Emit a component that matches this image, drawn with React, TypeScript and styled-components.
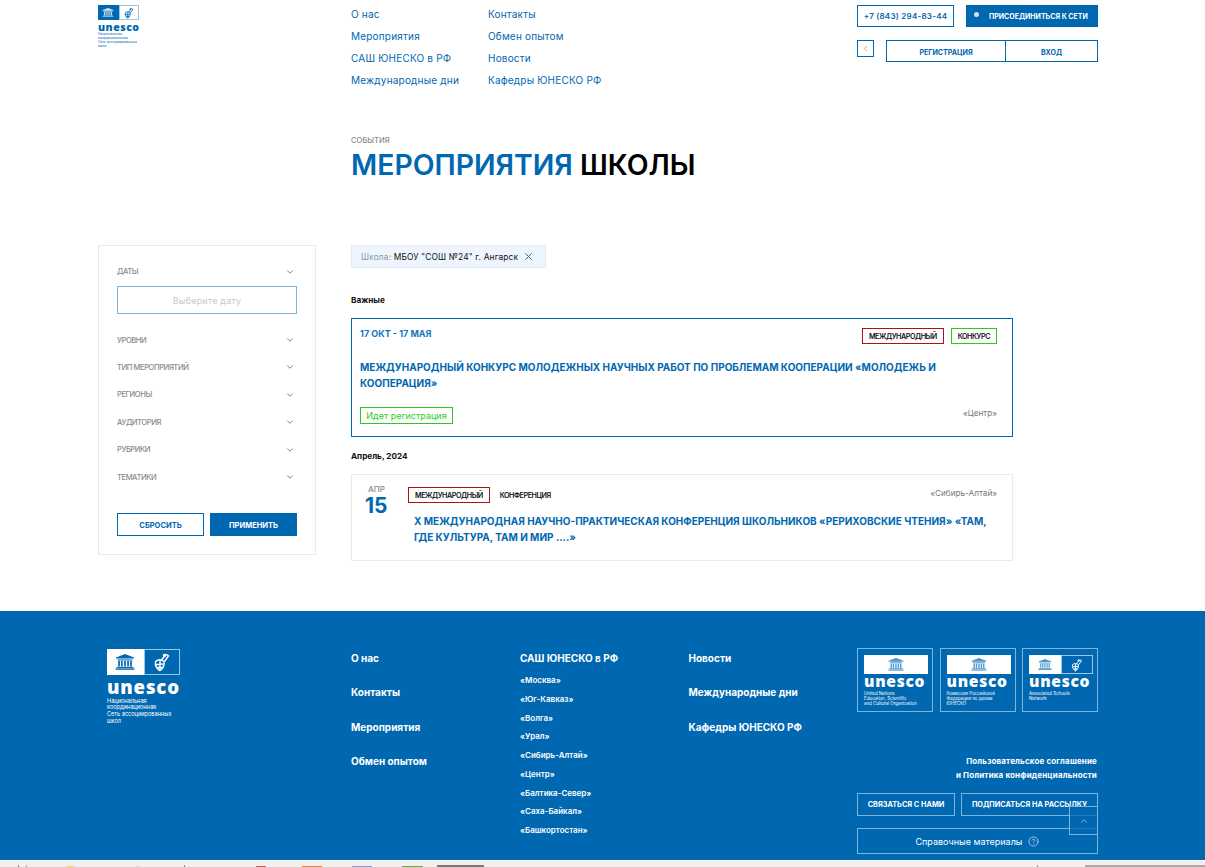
import React from 'react';
import styled, { createGlobalStyle } from 'styled-components';
import { ChevronDown, ChevronLeft, ChevronUp, CircleHelp, X } from 'lucide-react';

const BLUE = '#0067b1';
const PALE = '#dfecfa';

const Global = createGlobalStyle`
  html, body {
    margin: 0;
    height: 867px;
    overflow: hidden;
    background: #fff;
    font-family: Inter, "Noto Sans", sans-serif;
    color: ${BLUE};
  }
  * { box-sizing: border-box; }
  #root { position: relative; height: 867px; overflow: hidden; }
`;

const Header = styled.header`
  display: flex;
  height: 135px;
  padding: 5px 107px 0 98px;
`;

const LogoCol = styled.div`
  width: 253px;
`;

const NavCol = styled.nav<{ $width: number }>`
  width: ${p => p.$width}px;
  display: flex;
  flex-direction: column;
  gap: 7px;
  padding-top: 2px;
`;

const NavLink = styled.a`
  font-size: 10px;
  line-height: 15px;
  letter-spacing: 0.2px;
  white-space: nowrap;
`;

const HeaderRight = styled.div`
  margin-left: auto;
  width: 241px;
  display: flex;
  flex-direction: column;
  gap: 13px;
`;

const HeaderRow = styled.div`
  display: flex;
  align-items: flex-start;
`;

const Phone = styled.a`
  width: 97px;
  height: 22px;
  border: 1px solid ${BLUE};
  font-size: 8px;
  font-weight: 600;
  letter-spacing: 0.25px;
  display: flex;
  align-items: center;
  justify-content: center;
  white-space: nowrap;
`;

const JoinButton = styled.a`
  margin-left: 12px;
  width: 132px;
  height: 22px;
  background: ${BLUE};
  color: #fff;
  font-size: 7px;
  font-weight: 700;
  display: flex;
  align-items: center;
  gap: 10px;
  padding-left: 8px;
  white-space: nowrap;
`;

const JoinDot = styled.span`
  width: 5px;
  height: 5px;
  border-radius: 50%;
  background: #cfe2f3;
  margin-bottom: 3px;
`;

const BackBox = styled.a`
  width: 17px;
  height: 17px;
  border: 1px solid ${BLUE};
  margin-right: 12px;
  display: flex;
  align-items: center;
  justify-content: center;
  color: #7d8b98;
`;

const AuthButton = styled.a<{ $width: number }>`
  width: ${p => p.$width}px;
  height: 22px;
  border: 1px solid ${BLUE};
  font-size: 7.1px;
  font-weight: 700;
  padding-top: 2px;
  display: flex;
  align-items: center;
  justify-content: center;
  & + & { border-left: 0; }
`;

const TitleBlock = styled.section`
  height: 110px;
  padding-left: 351px;
`;

const Eyebrow = styled.div`
  font-size: 7.6px;
  line-height: 12px;
  color: #8b8b8b;
  font-weight: 500;
`;

const PageTitle = styled.h1`
  margin: 1px 0 0;
  font-size: 28.4px;
  line-height: 34px;
  font-weight: 600;
  white-space: nowrap;
  span { color: #000; }
`;

const Content = styled.main`
  display: flex;
  height: 366px;
  padding-left: 98px;
`;

const Sidebar = styled.aside`
  width: 218px;
  height: 310px;
  border: 1px solid ${PALE};
  padding: 12px 18px 18px;
  margin-right: 35px;
  display: flex;
  flex-direction: column;
`;

const FilterRow = styled.div`
  height: 27.4px;
  flex: none;
  display: flex;
  align-items: center;
  justify-content: space-between;
  padding-right: 2px;
  color: #8a8a8a;
  font-size: 7.6px;
  letter-spacing: -0.45px;
  font-weight: 500;
  white-space: nowrap;
`;

const DateInput = styled.div`
  flex: none;
  height: 28px;
  margin: 1px 0 12px;
  border: 1px solid #7fb3d9;
  color: #c8c8c8;
  font-size: 9px;
  letter-spacing: 0.2px;
  display: flex;
  align-items: center;
  justify-content: center;
`;

const SideButtons = styled.div`
  display: flex;
  gap: 6px;
  margin-top: 22px;
`;

const SideButton = styled.a<{ $solid?: boolean }>`
  flex: 1;
  height: 23px;
  border: 1px solid ${BLUE};
  background: ${p => (p.$solid ? BLUE : '#fff')};
  color: ${p => (p.$solid ? '#fff' : BLUE)};
  font-size: 7.5px;
  font-weight: 700;
  padding-top: 2px;
  display: flex;
  align-items: center;
  justify-content: center;
`;

const Feed = styled.div`
  width: 662px;
`;

const Chip = styled.div`
  width: 195px;
  height: 23px;
  background: #eef5fd;
  border: 1px solid ${PALE};
  padding-left: 9px;
  display: flex;
  align-items: center;
  gap: 5px;
  font-size: 8.4px;
  color: #111;
  letter-spacing: 0.15px;
  white-space: nowrap;
  b { color: #8b98a5; font-weight: 400; }
  svg { color: ${BLUE}; }
`;

const SectionLabel = styled.div<{ $top: number; $bottom: number }>`
  margin: ${p => p.$top}px 0 ${p => p.$bottom}px;
  font-size: 8.2px;
  line-height: 12px;
  font-weight: 700;
  color: #111;
`;

const FeaturedCard = styled.article`
  height: 119px;
  border: 1px solid ${BLUE};
  padding: 9px 15px 12px 8px;
  display: flex;
  flex-direction: column;
`;

const CardTop = styled.div`
  display: flex;
  justify-content: space-between;
`;

const DateRange = styled.div`
  font-size: 9px;
  line-height: 12px;
  font-weight: 700;
  color: #1674b9;
`;

const Tags = styled.div`
  display: flex;
  gap: 7px;
  align-items: center;
`;

const Tag = styled.span<{ $color?: string }>`
  height: 16px;
  padding: 0 6px;
  border: 1px solid ${p => p.$color ?? 'transparent'};
  color: #111;
  font-size: 7.2px;
  letter-spacing: -0.45px;
  font-weight: 600;
  display: flex;
  align-items: center;
  white-space: nowrap;
`;

const CardTitle = styled.h3<{ $top: number }>`
  margin: ${p => p.$top}px 0 0;
  font-size: 10px;
  line-height: 16px;
  font-weight: 700;
  color: ${BLUE};
`;

const CardBottom = styled.div`
  margin-top: auto;
  display: flex;
  justify-content: space-between;
  align-items: flex-start;
`;

const Status = styled.span`
  height: 17px;
  width: 93px;
  border: 1px solid #2ccb1a;
  color: #2ccb1a;
  font-size: 9px;
  display: flex;
  align-items: center;
  justify-content: center;
  white-space: nowrap;
`;

const Region = styled.span`
  font-size: 8.2px;
  color: #777;
  line-height: 12px;
  white-space: nowrap;
`;

const EventCard = styled.article`
  height: 87px;
  border: 1px solid ${PALE};
  padding: 12px 15px 0 13px;
  display: flex;
`;

const DateCol = styled.div`
  width: 43px;
  flex: none;
  text-align: left;
`;

const Month = styled.div`
  margin-top: -2px;
  padding-left: 3px;
  font-size: 8px;
  line-height: 9px;
  font-weight: 600;
  color: #9a9a9a;
`;

const Day = styled.div`
  margin-top: 1px;
  font-size: 21px;
  line-height: 22px;
  font-weight: 700;
  color: ${BLUE};
`;

const EventBody = styled.div`
  flex: 1;
`;

const EventTop = styled.div`
  display: flex;
  justify-content: space-between;
  align-items: flex-start;
`;

const EventTags = styled(Tags)`
  gap: 3px;
`;

const EventTitle = styled(CardTitle)`
  padding-left: 6px;
`;

const Footer = styled.footer`
  height: 249px;
  background: ${BLUE};
  color: #fff;
  display: flex;
  padding: 37px 107px 0 107px;
`;

const FooterLogo = styled.div`
  width: 244px;
  padding-top: 1px;
`;

const FooterNav = styled.nav<{ $width: number }>`
  width: ${p => p.$width}px;
  display: flex;
  flex-direction: column;
  gap: 20.4px;
  padding-top: 3px;
`;

const FooterLink = styled.a`
  display: block;
  font-size: 10px;
  line-height: 14px;
  font-weight: 700;
  white-space: nowrap;
`;

const RegionCol = styled.div`
  width: 168.5px;
  padding-top: 3px;
`;

const RegionList = styled.ul`
  list-style: none;
  margin: 9px 0 0;
  padding: 0;
  display: flex;
  flex-direction: column;
  gap: 6.75px;
`;

const RegionItem = styled.li`
  font-size: 8px;
  line-height: 12px;
  font-weight: 600;
  white-space: nowrap;
`;

const FooterRight = styled.div`
  margin-left: auto;
  width: 241px;
  flex: none;
  display: flex;
  flex-direction: column;
`;

const PartnerRow = styled.div`
  display: flex;
  justify-content: space-between;
`;

const PartnerCard = styled.div`
  width: 76px;
  height: 64px;
  border: 1px solid #7fb3d9;
  padding: 6px 6px 0;
`;

const Legal = styled.div`
  margin-top: 43px;
  text-align: right;
  font-size: 8px;
  line-height: 13.5px;
  font-weight: 700;
  letter-spacing: 0.15px;
  white-space: nowrap;
  padding-right: 1px;
`;

const FooterButtons = styled.div`
  display: flex;
  gap: 6px;
  margin-top: 11px;
`;

const OutlineButton = styled.a<{ $width?: number }>`
  width: ${p => (p.$width ? `${p.$width}px` : '100%')};
  height: 23px;
  border: 1px solid #7fb3d9;
  font-size: 7.3px;
  font-weight: 700;
  display: flex;
  align-items: center;
  justify-content: center;
  white-space: nowrap;
  overflow: hidden;
`;

const HelpButton = styled(OutlineButton)`
  margin-top: 12px;
  height: 26px;
  font-size: 9px;
  font-weight: 400;
  gap: 6px;
  svg { color: #a9cde8; }
`;

const ScrollTop = styled.a`
  position: absolute;
  left: 1069px;
  top: 806px;
  width: 29px;
  height: 29px;
  border: 1px solid #7fb3d9;
  background: rgba(0, 103, 177, 0.72);
  display: flex;
  align-items: center;
  justify-content: center;
  color: #9cc6e6;
`;

/* cropped taskbar under the page */
const Taskbar = styled.div`
  height: 7px;
  margin-top: 1px;
  background: #f0f0f0;
  display: flex;
  align-items: flex-end;
`;

const TaskItem = styled.span<{ $left: number; $width: number; $color: string; $height?: number }>`
  flex: none;
  margin-left: ${p => p.$left}px;
  width: ${p => p.$width}px;
  height: ${p => p.$height ?? 2}px;
  background: ${p => p.$color};
`;

const LogoFrame = styled.div<{ $width: number; $height: number }>`
  width: ${p => p.$width}px;
  height: ${p => p.$height}px;
  display: flex;
`;

const LogoCell = styled.div<{ $bg: string; $fg: string; $edge: string }>`
  flex: 1;
  background: ${p => p.$bg};
  color: ${p => p.$fg};
  border: 1px solid ${p => p.$edge};
  display: flex;
  align-items: center;
  justify-content: center;
`;

const Wordmark = styled.div<{ $size: number; $top: number; $color: string }>`
  font-family: "Open Sans", Inter, sans-serif;
  font-size: ${p => p.$size}px;
  line-height: ${p => p.$size * 0.8}px;
  margin-top: ${p => p.$top}px;
  font-weight: 800;
  letter-spacing: ${p => p.$size * 0.045}px;
  color: ${p => p.$color};
  white-space: nowrap;
`;

const LogoCaption = styled.div<{ $size: number; $line: number; $top: number }>`
  font-size: ${p => p.$size}px;
  line-height: ${p => p.$line}px;
  margin-top: ${p => p.$top}px;
  white-space: nowrap;
`;

const Temple = ({ size }: { size: number }) => (
  <svg width={size} height={size * 0.8} viewBox="0 0 20 16" fill="currentColor">
    <path d="M10 0 19 3.4V4.6H1V3.4Z" />
    <rect x="2.5" y="5.4" width="15" height="1" />
    <rect x="3.2" y="6.8" width="1.7" height="5.6" />
    <rect x="6" y="6.8" width="1.7" height="5.6" />
    <rect x="9.1" y="6.8" width="1.7" height="5.6" />
    <rect x="12.2" y="6.8" width="1.7" height="5.6" />
    <rect x="15.1" y="6.8" width="1.7" height="5.6" />
    <rect x="1.6" y="12.8" width="16.8" height="1.2" />
    <rect x="0.6" y="14.4" width="18.8" height="1.4" />
  </svg>
);

const Globe = ({ size }: { size: number }) => (
  <svg width={size} height={size} viewBox="0 0 20 20" fill="none" stroke="currentColor" strokeWidth="1.4">
    <path d="M3.5 9.5C6 7.5 9.5 7.5 12 9.5 12.6 13 11 16.5 8 18.5 5 17 3 13.5 3.5 9.5Z" />
    <path d="M4 12.5 11.5 12M8 8.5 8 18.5M5 15.5 10.5 15.5" />
    <path d="M9.5 8 14 2.5 16.5 4 12.5 9.5" />
    <circle cx="12.5" cy="3.5" r="1" />
  </svg>
);

const App: React.FC = () => {
  const filters = ['УРОВНИ', 'ТИП МЕРОПРИЯТИЙ', 'РЕГИОНЫ', 'АУДИТОРИЯ', 'РУБРИКИ', 'ТЕМАТИКИ'];
  const regions = ['«Москва»', '«Юг-Кавказ»', '«Волга»', '«Урал»', '«Сибирь-Алтай»', '«Центр»', '«Балтика-Север»', '«Саха-Байкал»', '«Башкортостан»'];
  const taskItems = [
    { left: 18, width: 1, color: '#8a8a8a', height: 3 },
    { left: 7, width: 1, color: '#aaa', height: 3 },
    { left: 39, width: 8, color: '#f4dc4a' },
    { left: 63, width: 1, color: '#ccc', height: 3 },
    { left: 46, width: 1, color: '#8a8a8a', height: 3 },
    { left: 71, width: 10, color: '#ef5350' },
    { left: 36, width: 20, color: '#f47a30' },
    { left: 30, width: 20, color: '#7c9fd4' },
    { left: 30, width: 21, color: '#5cb531' },
    { left: 14, width: 47, color: '#777', height: 3 },
    { left: 553, width: 1, color: '#999', height: 3 },
    { left: 47, width: 120, color: '#aaa', height: 3 },
  ];

  return (
    <>
      <Global />
      <Header>
        <LogoCol>
          <LogoFrame $width={41} $height={15}>
            <LogoCell $bg={BLUE} $fg="#d5e7f5" $edge={BLUE}>
              <Temple size={12} />
            </LogoCell>
            <LogoCell $bg="#fff" $fg={BLUE} $edge="#9cc6e6">
              <Globe size={12} />
            </LogoCell>
          </LogoFrame>
          <Wordmark $size={10.6} $top={3} $color={BLUE}>unesco</Wordmark>
          <LogoCaption $size={3.4} $line={3.9} $top={2}>
            Национальная
            <br />
            координационная
            <br />
            Сеть ассоциированных
            <br />
            школ
          </LogoCaption>
        </LogoCol>
        <NavCol $width={137}>
          <NavLink>О нас</NavLink>
          <NavLink>Мероприятия</NavLink>
          <NavLink>САШ ЮНЕСКО в РФ</NavLink>
          <NavLink>Международные дни</NavLink>
        </NavCol>
        <NavCol $width={160}>
          <NavLink>Контакты</NavLink>
          <NavLink>Обмен опытом</NavLink>
          <NavLink>Новости</NavLink>
          <NavLink>Кафедры ЮНЕСКО РФ</NavLink>
        </NavCol>
        <HeaderRight>
          <HeaderRow>
            <Phone>+7 (843) 294-83-44</Phone>
            <JoinButton>
              <JoinDot />
              ПРИСОЕДИНИТЬСЯ К СЕТИ
            </JoinButton>
          </HeaderRow>
          <HeaderRow>
            <BackBox>
              <ChevronLeft size={9} />
            </BackBox>
            <AuthButton $width={120}>РЕГИСТРАЦИЯ</AuthButton>
            <AuthButton $width={92}>ВХОД</AuthButton>
          </HeaderRow>
        </HeaderRight>
      </Header>

      <TitleBlock>
        <Eyebrow>СОБЫТИЯ</Eyebrow>
        <PageTitle>
          МЕРОПРИЯТИЯ <span>ШКОЛЫ</span>
        </PageTitle>
      </TitleBlock>

      <Content>
        <Sidebar>
          <FilterRow>
            ДАТЫ
            <ChevronDown size={10} color="#666" />
          </FilterRow>
          <DateInput>Выберите дату</DateInput>
          {filters.map(name => (
            <FilterRow key={name}>
              {name}
              <ChevronDown size={10} color="#666" />
            </FilterRow>
          ))}
          <SideButtons>
            <SideButton>СБРОСИТЬ</SideButton>
            <SideButton $solid>ПРИМЕНИТЬ</SideButton>
          </SideButtons>
        </Sidebar>

        <Feed>
          <Chip>
            <span>
              <b>Школа: </b>МБОУ "СОШ №24" г. Ангарск
            </span>
            <X size={11} />
          </Chip>
          <SectionLabel $top={26} $bottom={12}>Важные</SectionLabel>
          <FeaturedCard>
            <CardTop>
              <DateRange>17 ОКТ - 17 МАЯ</DateRange>
              <Tags>
                <Tag $color="#b01116">МЕЖДУНАРОДНЫЙ</Tag>
                <Tag $color="#2ccb1a">КОНКУРС</Tag>
              </Tags>
            </CardTop>
            <CardTitle $top={15}>
              МЕЖДУНАРОДНЫЙ КОНКУРС МОЛОДЕЖНЫХ НАУЧНЫХ РАБОТ ПО ПРОБЛЕМАМ КООПЕРАЦИИ «МОЛОДЕЖЬ И КООПЕРАЦИЯ»
            </CardTitle>
            <CardBottom>
              <Status>Идет регистрация</Status>
              <Region>«Центр»</Region>
            </CardBottom>
          </FeaturedCard>
          <SectionLabel $top={13} $bottom={12}>Апрель, 2024</SectionLabel>
          <EventCard>
            <DateCol>
              <Month>АПР</Month>
              <Day>15</Day>
            </DateCol>
            <EventBody>
              <EventTop>
                <EventTags>
                  <Tag $color="#b01116">МЕЖДУНАРОДНЫЙ</Tag>
                  <Tag>КОНФЕРЕНЦИЯ</Tag>
                </EventTags>
                <Region>«Сибирь-Алтай»</Region>
              </EventTop>
              <EventTitle $top={10}>
                X МЕЖДУНАРОДНАЯ НАУЧНО-ПРАКТИЧЕСКАЯ КОНФЕРЕНЦИЯ ШКОЛЬНИКОВ «РЕРИХОВСКИЕ ЧТЕНИЯ» «ТАМ, ГДЕ КУЛЬТУРА, ТАМ И МИР ....»
              </EventTitle>
            </EventBody>
          </EventCard>
        </Feed>
      </Content>

      <Footer>
        <FooterLogo>
          <LogoFrame $width={73} $height={26}>
            <LogoCell $bg="#fff" $fg={BLUE} $edge="#fff">
              <Temple size={20} />
            </LogoCell>
            <LogoCell $bg={BLUE} $fg="#fff" $edge="#9cc6e6">
              <Globe size={20} />
            </LogoCell>
          </LogoFrame>
          <Wordmark $size={18.6} $top={5} $color="#fff">unesco</Wordmark>
          <LogoCaption $size={5.6} $line={6.6} $top={3}>
            Национальная
            <br />
            координационная
            <br />
            Сеть ассоциированных
            <br />
            школ
          </LogoCaption>
        </FooterLogo>
        <FooterNav $width={169}>
          <FooterLink>О нас</FooterLink>
          <FooterLink>Контакты</FooterLink>
          <FooterLink>Мероприятия</FooterLink>
          <FooterLink>Обмен опытом</FooterLink>
        </FooterNav>
        <RegionCol>
          <FooterLink>САШ ЮНЕСКО в РФ</FooterLink>
          <RegionList>
            {regions.map(name => (
              <RegionItem key={name}>{name}</RegionItem>
            ))}
          </RegionList>
        </RegionCol>
        <FooterNav $width={168}>
          <FooterLink>Новости</FooterLink>
          <FooterLink>Международные дни</FooterLink>
          <FooterLink>Кафедры ЮНЕСКО РФ</FooterLink>
        </FooterNav>
        <FooterRight>
          <PartnerRow>
            <PartnerCard>
              <LogoFrame $width={64} $height={19}>
                <LogoCell $bg="#fff" $fg="#4c96cc" $edge="#fff">
                  <Temple size={16} />
                </LogoCell>
              </LogoFrame>
              <Wordmark $size={15.6} $top={1} $color="#fff">unesco</Wordmark>
              <LogoCaption $size={4.4} $line={5} $top={4}>
                United Nations
                <br />
                Education, Scientific
                <br />
                and Cultural Organization
              </LogoCaption>
            </PartnerCard>
            <PartnerCard>
              <LogoFrame $width={64} $height={19}>
                <LogoCell $bg="#fff" $fg="#4c96cc" $edge="#fff">
                  <Temple size={16} />
                </LogoCell>
              </LogoFrame>
              <Wordmark $size={15.6} $top={1} $color="#fff">unesco</Wordmark>
              <LogoCaption $size={4.4} $line={5} $top={4}>
                Комиссия Российской
                <br />
                Федерации по делам
                <br />
                ЮНЕСКО
              </LogoCaption>
            </PartnerCard>
            <PartnerCard>
              <LogoFrame $width={64} $height={19}>
                <LogoCell $bg="#fff" $fg="#4c96cc" $edge="#fff">
                  <Temple size={14} />
                </LogoCell>
                <LogoCell $bg={BLUE} $fg="#fff" $edge="#9cc6e6">
                  <Globe size={14} />
                </LogoCell>
              </LogoFrame>
              <Wordmark $size={15.6} $top={1} $color="#fff">unesco</Wordmark>
              <LogoCaption $size={4.4} $line={5} $top={4}>
                Associated Schools
                <br />
                Network
              </LogoCaption>
            </PartnerCard>
          </PartnerRow>
          <Legal>
            Пользовательское соглашение
            <br />
            и Политика конфиденциальности
          </Legal>
          <FooterButtons>
            <OutlineButton $width={98}>СВЯЗАТЬСЯ С НАМИ</OutlineButton>
            <OutlineButton $width={137}>ПОДПИСАТЬСЯ НА РАССЫЛКУ</OutlineButton>
          </FooterButtons>
          <HelpButton>
            Справочные материалы
            <CircleHelp size={11} />
          </HelpButton>
        </FooterRight>
      </Footer>

      <ScrollTop>
        <ChevronUp size={10} />
      </ScrollTop>

      <Taskbar>
        {taskItems.map((item, i) => (
          <TaskItem key={i} $left={item.left} $width={item.width} $color={item.color} $height={item.height} />
        ))}
      </Taskbar>
    </>
  );
};

export default App;
